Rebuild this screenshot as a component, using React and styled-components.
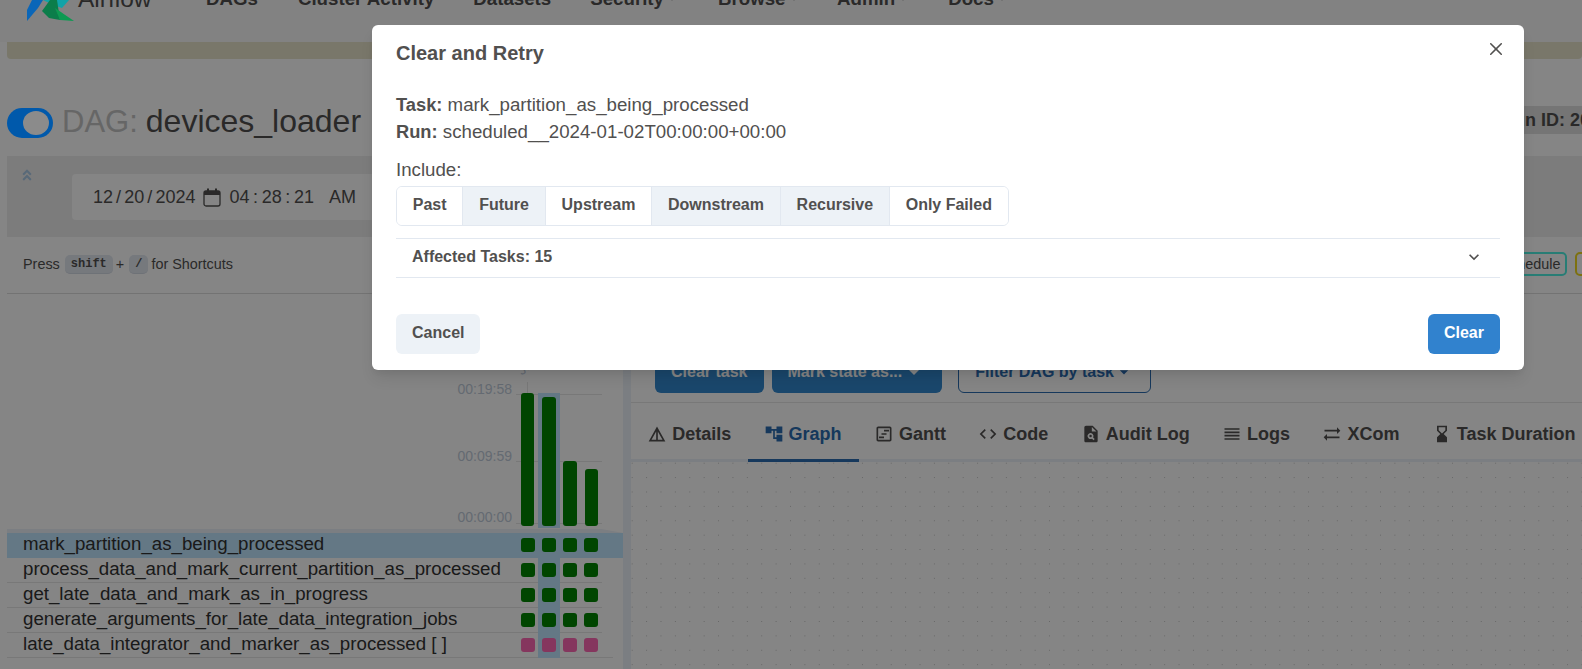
import React from 'react';
import styled, { createGlobalStyle } from 'styled-components';
import {
  MdDetails,
  MdAccountTree,
  MdOutlineViewTimeline,
  MdCode,
  MdPlagiarism,
  MdReorder,
  MdSyncAlt,
  MdHourglassBottom,
  MdExpandMore,
  MdArrowDropDown,
} from 'react-icons/md';
import { FaAngleDoubleUp } from 'react-icons/fa';

const GlobalStyle = createGlobalStyle`
  html, body {
    margin: 0;
    padding: 0;
    background: #fff;
    overflow: hidden;
  }
  * { box-sizing: border-box; }
  body {
    font-family: "Liberation Sans", Arial, sans-serif;
    color: #51504f;
    font-size: 18px;
  }
`;

const Page = styled.div`
  position: relative;
  width: 1582px;
  height: 669px;
  overflow: hidden;
`;

const Overlay = styled.div`
  position: absolute;
  inset: 0;
  background: rgba(0, 0, 0, 0.48);
  z-index: 10;
`;

/* top nav, the page is scrolled so only its lower edge shows */
const Nav = styled.nav`
  display: flex;
  align-items: center;
  height: 84px;
  margin-top: -42px;
  padding: 0 0 2px 27px;
  background: #f9f9f9;
`;

const Logo = styled.svg`
  position: relative;
  z-index: 11;
  width: 47px;
  height: 42px;
  margin-top: 2px;
  flex: none;
`;

const Brand = styled.span`
  font-size: 24.5px;
  color: #51504f;
  margin-left: 4px;
  width: 128px;
`;

const NavItem = styled.span`
  display: flex;
  align-items: center;
  font-weight: 700;
  font-size: 18.7px;
  color: #51504f;
  margin-right: ${(p) => p.$gap}px;
`;

const NavCaret = styled.span`
  width: 0;
  height: 0;
  margin-left: 4px;
  border-left: 4px solid transparent;
  border-right: 4px solid transparent;
  border-top: 4px solid #c4c4c4;
`;

const Banner = styled.div`
  height: 17px;
  margin-left: 7px;
  background: #e8e5cc;
  border-radius: 0 0 4px 4px;
`;

const DagHeader = styled.header`
  display: flex;
  align-items: center;
  height: 33px;
  margin: 47px 0 0 7px;
`;

const DagTitle = styled.div`
  flex: 1;
  display: flex;
  align-items: center;
  font-size: 32px;
  line-height: 33px;
  color: #51504f;
`;

const Toggle = styled.div`
  position: relative;
  z-index: 11;
  width: 46px;
  height: 30px;
  margin-right: 9px;
  border-radius: 15px;
  background: #0059ab;
  display: flex;
  align-items: center;
  justify-content: flex-end;
  padding-right: 4px;
`;

const Knob = styled.div`
  width: 26px;
  height: 24px;
  border-radius: 50%;
  background: #8b8b8b;
`;

const TitleText = styled.span`
  margin-bottom: 2px;
  white-space: nowrap;
`;

const DagLabel = styled.span`
  font-size: 31px;
  color: #c4c4c4;
  margin-right: 8px;
`;

const RunBadge = styled.div`
  flex: 0 0 89px;
  height: 28px;
  margin-top: -6px;
  padding-left: 8px;
  background: #e0e0e0;
  font-weight: 700;
  line-height: 28px;
  white-space: nowrap;
  overflow: hidden;
`;

const FilterPanel = styled.section`
  display: flex;
  height: 81px;
  margin: 17px 0 0 7px;
  background: #eeeeee;
`;

const CollapseIcon = styled(FaAngleDoubleUp)`
  width: 14px;
  height: 14px;
  margin: 12px 0 0 13px;
  color: #a9c9e6;
  flex: none;
`;

const DateInput = styled.div`
  display: flex;
  align-items: center;
  width: 420px;
  height: 46px;
  margin: 18px 0 0 38px;
  padding-left: 21px;
  background: #fff;
  border-radius: 4px;
  font-size: 18px;
  color: #51504f;
`;

const DateSegment = styled.span`
  word-spacing: ${(p) => p.$spacing}px;
  white-space: nowrap;
`;

const CalendarIcon = styled.svg`
  width: 18px;
  height: 19px;
  margin: 0 9px 0 7px;
  flex: none;
`;

const Meridiem = styled.span`
  margin-left: 15px;
`;

const ShortcutRow = styled.div`
  display: flex;
  align-items: center;
  justify-content: space-between;
  height: 57px;
  margin-left: 7px;
  border-bottom: 1px solid #dcdcdc;
  padding-left: 16px;
  font-size: 14.4px;
  overflow: hidden;
`;

const Hint = styled.div`
  display: flex;
  align-items: center;
  padding-bottom: 2px;
`;

const Kbd = styled.kbd`
  font-family: "Liberation Mono", monospace;
  font-weight: 700;
  font-size: 12px;
  line-height: 19px;
  height: 19px;
  padding: 0 6px;
  margin: 0 3px 0 5px;
  background: #e2e8f0;
  border-radius: 5px;
  border-bottom: 1px solid #d4dae4;
`;

const Legend = styled.div`
  display: flex;
  flex: none;
  gap: 8px;
  margin-right: -85px;
  padding-bottom: 2px;
`;

const StateBadge = styled.span`
  height: 24px;
  line-height: 20px;
  padding: 0 5px;
  border: 2px solid ${(p) => p.$color};
  border-radius: 5px;
  font-size: 14.4px;
  white-space: nowrap;
`;

const Split = styled.div`
  display: flex;
  height: 375px;
  margin-left: 7px;
`;

const LeftPane = styled.div`
  width: 616px;
  flex: none;
`;

const Splitter = styled.div`
  width: 8px;
  flex: none;
  background: #ecf1f9;
`;

const ChartRow = styled.div`
  display: flex;
  justify-content: flex-end;
  width: 595px;
  height: 235px;
`;

const AxisColumn = styled.div`
  display: flex;
  flex-direction: column;
  justify-content: flex-end;
  align-items: flex-end;
  padding: 0 4px 4px 0;
  font-size: 14px;
  color: #c0ccda;
`;

const AxisLabel = styled.span`
  line-height: 16px;
  margin-bottom: ${(p) => p.$gap}px;
`;

const BarsArea = styled.div`
  position: relative;
  width: 86px;
  display: flex;
  justify-content: flex-end;
  align-items: flex-end;
`;

const GridLine = styled.div`
  position: absolute;
  left: 0;
  right: 0;
  top: ${(p) => p.$top}px;
  height: 1px;
  background: #e6e6e6;
`;

const Tick = styled.div`
  position: absolute;
  left: 11px;
  top: 88px;
  width: 1px;
  height: 12px;
  background: #e6e6e6;
`;

const RunDate = styled.span`
  position: absolute;
  left: 8px;
  top: 68px;
  font-size: 14px;
  line-height: 16px;
  color: #c0ccda;
  white-space: nowrap;
  transform: rotate(-40deg);
  transform-origin: left bottom;
`;

const BarCell = styled.div`
  position: relative;
  width: 21.25px;
  height: 135px;
  margin-bottom: 1px;
  display: flex;
  justify-content: center;
  align-items: flex-end;
  padding-bottom: 2px;
  background: ${(p) => (p.$selected ? '#c0e6ff' : 'transparent')};
`;

const Bar = styled.div`
  width: 13.5px;
  border-radius: 3px;
  background: #008400;
`;

const HeaderBand = styled.div`
  height: 4px;
  background: #ecf1f9;
  clip-path: polygon(0 0, 96.5% 0, 100% 100%, 0 100%);
`;

const TaskRow = styled.div`
  background: ${(p) => (p.$selected ? '#c0e6ff' : 'transparent')};
`;

const RowInner = styled.div`
  display: flex;
  align-items: center;
  height: 25px;
  width: ${(p) => (p.$last ? 606 : 595)}px;
  border-bottom: 1px solid ${(p) => (p.$selected ? 'transparent' : '#e6e6e6')};
`;

const TaskName = styled.span`
  width: 510px;
  flex: none;
  padding: 0 0 2px 16px;
  font-size: 18.7px;
  line-height: 22px;
  color: #333;
  white-space: nowrap;
`;

const Cell = styled.div`
  width: 21.25px;
  height: 25px;
  flex: none;
  display: flex;
  align-items: center;
  justify-content: center;
  background: ${(p) => (p.$selected ? '#c0e6ff' : 'transparent')};
`;

const Square = styled.div`
  width: 14px;
  height: 14px;
  border-radius: 3px;
  background: ${(p) => (p.$failed ? '#ff69b4' : '#008400')};
`;

const RightPane = styled.div`
  flex: 1;
  min-width: 0;
  display: flex;
  flex-direction: column;
`;

const ActionBar = styled.div`
  display: flex;
  align-items: flex-end;
  gap: 8px;
  height: 109px;
  padding: 0 0 9px 24px;
  border-bottom: 1px solid #e6e6e6;
`;

const ActionButton = styled.div`
  display: flex;
  align-items: center;
  height: 42px;
  padding: 0 16px;
  border-radius: 6px;
  font-weight: 700;
  font-size: 16px;
  white-space: nowrap;
  background: ${(p) => (p.$outline ? 'transparent' : '#3389d0')};
  color: ${(p) => (p.$outline ? '#2b6cb0' : '#fff')};
  border: ${(p) => (p.$outline ? '1px solid #2b6cb0' : 'none')};
  margin-left: ${(p) => (p.$outline ? 8 : 0)}px;
`;

const TabBar = styled.div`
  display: flex;
  height: 59px;
  padding-left: 1px;
  border-bottom: 3px solid #ecf1f9;
  white-space: nowrap;
`;

const Tab = styled.div`
  display: flex;
  align-items: center;
  gap: 5px;
  height: 59px;
  padding: 6px 17.2px 0 15.2px;
  font-weight: 700;
  font-size: 18px;
  color: ${(p) => (p.$active ? '#2b6cb0' : '#51504f')};
  border-bottom: 3px solid ${(p) => (p.$active ? '#2b6cb0' : 'transparent')};
  svg {
    width: 20px;
    height: 20px;
    flex: none;
  }
`;

const GraphCanvas = styled.div`
  flex: 1;
  background-color: #fff;
  background-image: radial-gradient(#c4c4c4 0.7px, transparent 0.8px);
  background-size: 14.4px 14.4px;
  background-position: -6px -6px;
`;

/* modal */
const Modal = styled.div`
  position: absolute;
  z-index: 20;
  top: 25px;
  left: 372px;
  width: 1152px;
  height: 345px;
  display: flex;
  flex-direction: column;
  background: #fff;
  border-radius: 6px;
  box-shadow: 0 10px 15px -3px rgba(0, 0, 0, 0.1), 0 4px 6px -2px rgba(0, 0, 0, 0.05);
  color: #51504f;
`;

const ModalTitle = styled.h2`
  margin: 0;
  padding: 13px 24px 0;
  font-size: 20px;
  line-height: 30px;
  font-weight: 700;
`;

const CloseButton = styled.svg`
  position: absolute;
  top: 18px;
  right: 22px;
  width: 12px;
  height: 12px;
  color: #51504f;
`;

const ModalBody = styled.div`
  padding: 23px 24px 0;
  flex: 1;
`;

const InfoLine = styled.div`
  font-size: 18.7px;
  line-height: 27px;
  white-space: nowrap;
  strong {
    font-size: 18.3px;
    font-weight: 700;
  }
`;

const IncludeLabel = styled.div`
  font-size: 18.7px;
  line-height: 27px;
  margin-top: 11px;
`;

const ButtonGroup = styled.div`
  display: inline-flex;
  height: 40px;
  margin-top: 3px;
  border: 1px solid #e2e8f0;
  border-radius: 6px;
  overflow: hidden;
  vertical-align: top;
`;

const ToggleButton = styled.div`
  display: flex;
  align-items: center;
  padding: 0 15.8px 2px;
  font-size: 16px;
  font-weight: 700;
  white-space: nowrap;
  background: ${(p) => (p.$on ? '#edf2f7' : '#fff')};
  & + & {
    border-left: 1px solid #e2e8f0;
  }
`;

const AccordionRow = styled.div`
  display: flex;
  align-items: center;
  justify-content: space-between;
  height: 40px;
  margin-top: 12px;
  padding: 0 16px 2px;
  border-top: 1px solid #e2e8f0;
  border-bottom: 1px solid #e2e8f0;
  font-size: 16px;
  font-weight: 700;
  svg {
    width: 20px;
    height: 20px;
  }
`;

const ModalFooter = styled.div`
  display: flex;
  justify-content: space-between;
  padding: 0 24px 16px;
`;

const FooterButton = styled.div`
  display: flex;
  align-items: center;
  height: 40px;
  padding: 0 16px 2px;
  border-radius: 6px;
  font-size: 16px;
  font-weight: 700;
  background: ${(p) => (p.$primary ? '#3182ce' : '#edf2f7')};
  color: ${(p) => (p.$primary ? '#fff' : '#51504f')};
`;

const navItems = [
  { label: 'DAGs', gap: 40 },
  { label: 'Cluster Activity', gap: 39 },
  { label: 'Datasets', gap: 39 },
  { label: 'Security', gap: 42, caret: true },
  { label: 'Browse', gap: 39.5, caret: true },
  { label: 'Admin', gap: 41, caret: true },
  { label: 'Docs', gap: 0, caret: true },
];

const tabs = [
  ['Details', MdDetails],
  ['Graph', MdAccountTree, true],
  ['Gantt', MdOutlineViewTimeline],
  ['Code', MdCode],
  ['Audit Log', MdPlagiarism],
  ['Logs', MdReorder],
  ['XCom', MdSyncAlt],
  ['Task Duration', MdHourglassBottom],
];

const bars = [133, 129, 65, 57];

const taskRows = [
  { name: 'mark_partition_as_being_processed', selected: true },
  { name: 'process_data_and_mark_current_partition_as_processed' },
  { name: 'get_late_data_and_mark_as_in_progress' },
  { name: 'generate_arguments_for_late_data_integration_jobs' },
  { name: 'late_data_integrator_and_marker_as_processed [ ]', failed: true, last: true },
];

const includeOptions = [
  ['Past', false],
  ['Future', true],
  ['Upstream', false],
  ['Downstream', true],
  ['Recursive', true],
  ['Only Failed', false],
];

const App = () => (
  <Page>
    <GlobalStyle />
    <Nav>
      <Logo viewBox="0 0 47 42">
        <path d="M0 42 L0 31 L5 21 L16 21 L11 29 Z" fill="#0a66b8" />
        <path d="M16 21 L25 21 L42 21 L35 29 L26 26 Z" fill="#11a3a8" />
        <path d="M15 32 L23 21 L30 21 L33 41 L22 39 Z" fill="#0b7d4a" />
        <path d="M28 29 L47 42 L33 41 Z" fill="#0d9a52" />
      </Logo>
      <Brand>Airflow</Brand>
      {navItems.map((item) => (
        <NavItem key={item.label} $gap={item.gap}>
          {item.label}
          {item.caret && <NavCaret />}
        </NavItem>
      ))}
    </Nav>
    <Banner />

    <DagHeader>
      <DagTitle>
        <Toggle>
          <Knob />
        </Toggle>
        <TitleText>
          <DagLabel>DAG:</DagLabel>
          devices_loader
        </TitleText>
      </DagTitle>
      <RunBadge>Run ID: 2024-01-02</RunBadge>
    </DagHeader>

    <FilterPanel>
      <CollapseIcon />
      <DateInput>
        <DateSegment $spacing={-1.9}>12 / 20 / 2024</DateSegment>
        <CalendarIcon viewBox="0 0 18 19">
          <rect x="1" y="3" width="16" height="15" rx="2" fill="none" stroke="currentColor" strokeWidth="1.3" />
          <rect x="1" y="3" width="16" height="4" fill="currentColor" />
          <rect x="4" y="0.5" width="2" height="3" fill="currentColor" />
          <rect x="12" y="0.5" width="2" height="3" fill="currentColor" />
        </CalendarIcon>
        <DateSegment $spacing={-1.4}>04 : 28 : 21</DateSegment>
        <Meridiem>AM</Meridiem>
      </DateInput>
    </FilterPanel>

    <ShortcutRow>
      <Hint>
        Press<Kbd>shift</Kbd>+<Kbd>/</Kbd>for Shortcuts
      </Hint>
      <Legend>
        <StateBadge $color="#4df0e0">up_for_reschedule</StateBadge>
        <StateBadge $color="#f0d81f">up_for_retry</StateBadge>
      </Legend>
    </ShortcutRow>

    <Split>
      <LeftPane>
        <ChartRow>
          <AxisColumn>
            <AxisLabel $gap={51}>00:19:58</AxisLabel>
            <AxisLabel $gap={45}>00:09:59</AxisLabel>
            <AxisLabel $gap={0}>00:00:00</AxisLabel>
          </AxisColumn>
          <BarsArea>
            <GridLine $top={100} />
            <GridLine $top={167} />
            <GridLine $top={229} />
            <Tick />
            <RunDate>Jan 02</RunDate>
            {bars.map((h, i) => (
              <BarCell key={i} $selected={i === 1}>
                <Bar style={{ height: h }} />
              </BarCell>
            ))}
          </BarsArea>
        </ChartRow>
        <HeaderBand />
        {taskRows.map((row) => (
          <TaskRow key={row.name} $selected={row.selected}>
            <RowInner $selected={row.selected} $last={row.last}>
              <TaskName>{row.name}</TaskName>
              {bars.map((_, i) => (
                <Cell key={i} $selected={i === 1}>
                  <Square $failed={row.failed} />
                </Cell>
              ))}
            </RowInner>
          </TaskRow>
        ))}
      </LeftPane>
      <Splitter />
      <RightPane>
        <ActionBar>
          <ActionButton>Clear task</ActionButton>
          <ActionButton>
            Mark state as...
            <MdArrowDropDown size={24} />
          </ActionButton>
          <ActionButton $outline>
            Filter DAG by task
            <MdArrowDropDown size={20} />
          </ActionButton>
        </ActionBar>
        <TabBar>
          {tabs.map(([label, Icon, active]) => (
            <Tab key={label} $active={active}>
              <Icon />
              {label}
            </Tab>
          ))}
        </TabBar>
        <GraphCanvas />
      </RightPane>
    </Split>

    <Overlay />

    <Modal>
      <ModalTitle>Clear and Retry</ModalTitle>
      <CloseButton viewBox="0 0 24 24">
        <path
          fill="currentColor"
          d="M.439,21.44a1.5,1.5,0,0,0,2.122,2.121L11.823,14.3a.25.25,0,0,1,.354,0l9.262,9.263a1.5,1.5,0,1,0,2.122-2.121L14.3,12.177a.25.25,0,0,1,0-.354l9.263-9.262A1.5,1.5,0,0,0,21.439.44L12.177,9.7a.25.25,0,0,1-.354,0L2.561.44A1.5,1.5,0,0,0,.439,2.561L9.7,11.823a.25.25,0,0,1,0,.354Z"
        />
      </CloseButton>
      <ModalBody>
        <InfoLine>
          <strong>Task:</strong> mark_partition_as_being_processed
        </InfoLine>
        <InfoLine>
          <strong>Run:</strong> scheduled__2024-01-02T00:00:00+00:00
        </InfoLine>
        <IncludeLabel>Include:</IncludeLabel>
        <ButtonGroup>
          {includeOptions.map(([label, on]) => (
            <ToggleButton key={label} $on={on}>
              {label}
            </ToggleButton>
          ))}
        </ButtonGroup>
        <AccordionRow>
          Affected Tasks: 15
          <MdExpandMore />
        </AccordionRow>
      </ModalBody>
      <ModalFooter>
        <FooterButton>Cancel</FooterButton>
        <FooterButton $primary>Clear</FooterButton>
      </ModalFooter>
    </Modal>
  </Page>
);

export default App;
